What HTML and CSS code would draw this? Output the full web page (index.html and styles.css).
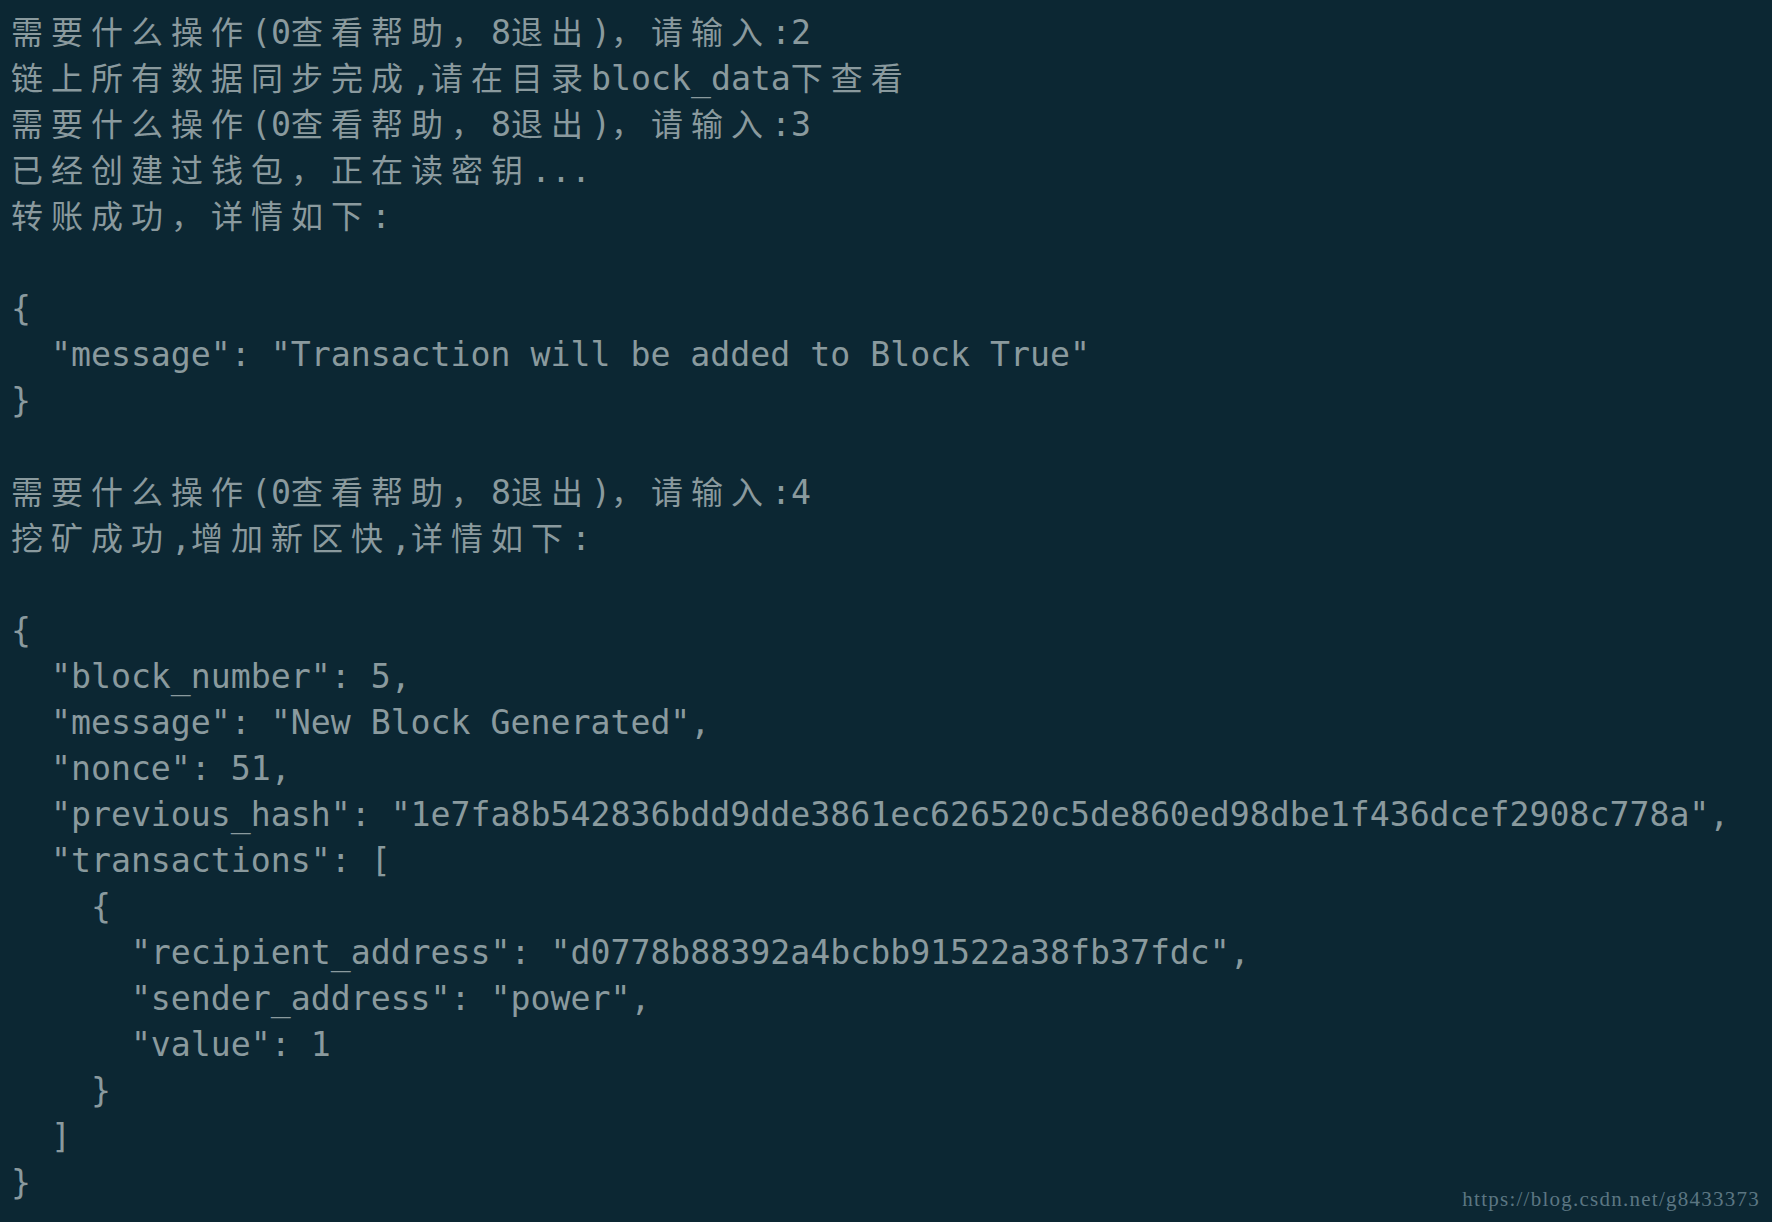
FILE: index.html
```html
<!DOCTYPE html>
<html lang="zh-CN">
<head>
<meta charset="utf-8">
<title>Terminal</title>
<link rel="stylesheet" href="styles.css">
</head>
<body>
<main class="term">
<div class="ln"><span class="w">需要什么操作</span>(0<span class="w">查看帮助，</span>8<span class="w">退出</span>)<span class="w">，请输入</span>:2</div>
<div class="ln"><span class="w">链上所有数据同步完成</span>,<span class="w">请在目录</span>block_data<span class="w">下查看</span></div>
<div class="ln"><span class="w">需要什么操作</span>(0<span class="w">查看帮助，</span>8<span class="w">退出</span>)<span class="w">，请输入</span>:3</div>
<div class="ln"><span class="w">已经创建过钱包，正在读密钥</span>...</div>
<div class="ln"><span class="w">转账成功，详情如下</span>:</div>
<div class="ln"> </div>
<div class="ln">{</div>
<div class="ln">  "message": "Transaction will be added to Block True"</div>
<div class="ln">}</div>
<div class="ln"> </div>
<div class="ln"><span class="w">需要什么操作</span>(0<span class="w">查看帮助，</span>8<span class="w">退出</span>)<span class="w">，请输入</span>:4</div>
<div class="ln"><span class="w">挖矿成功</span>,<span class="w">增加新区快</span>,<span class="w">详情如下</span>:</div>
<div class="ln"> </div>
<div class="ln">{</div>
<div class="ln">  "block_number": 5,</div>
<div class="ln">  "message": "New Block Generated",</div>
<div class="ln">  "nonce": 51,</div>
<div class="ln">  "previous_hash": "1e7fa8b542836bdd9dde3861ec626520c5de860ed98dbe1f436dcef2908c778a",</div>
<div class="ln">  "transactions": [</div>
<div class="ln">    {</div>
<div class="ln">      "recipient_address": "d0778b88392a4bcbb91522a38fb37fdc",</div>
<div class="ln">      "sender_address": "power",</div>
<div class="ln">      "value": 1</div>
<div class="ln">    }</div>
<div class="ln">  ]</div>
<div class="ln">}</div>
</main>
<div class="watermark">https://blog.csdn.net/g8433373</div>
</body>
</html>
```

FILE: styles.css
```css
html, body {
  margin: 0;
  padding: 0;
  background: #0c2733;
  height: 100%;
  overflow: hidden;
}

.term {
  padding: 10px 0 0 11px;
  color: #8a9a9e;
  font-family: "DejaVu Sans Mono", "Noto Sans CJK SC", monospace;
  font-size: 33.2px;
  line-height: 46px;
}

.ln {
  height: 46px;
  white-space: pre;
}

.w {
  font-family: "Noto Sans CJK SC", sans-serif;
  font-size: 32px;
  line-height: 0;
  letter-spacing: 8px;
}

.watermark {
  position: absolute;
  right: 12px;
  bottom: 10px;
  font-family: "Liberation Serif", serif;
  font-size: 21px;
  letter-spacing: 1.25px;
  color: #5b7682;
}
```
